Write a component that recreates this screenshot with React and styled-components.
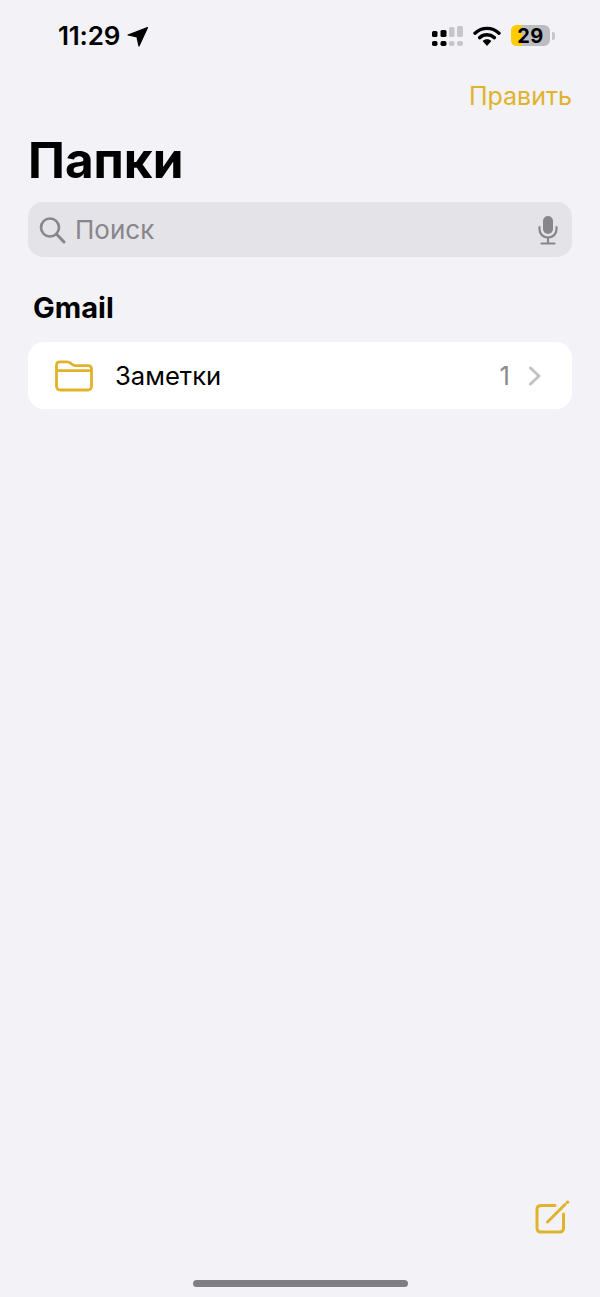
import React from "react";
import styled, { createGlobalStyle } from "styled-components";

const GlobalStyle = createGlobalStyle`
html, body {
  margin: 0;
  padding: 0;
  background: #f2f2f7;
}
`;

const Screen = styled.div`
position: relative;
display: flex;
flex-direction: column;
width: 600px;
height: 1297px;
overflow: hidden;
background: #f2f2f7;
font-family: Inter, "Liberation Sans", sans-serif;
color: #000;
`;

const StatusBar = styled.div`
display: flex;
align-items: center;
justify-content: space-between;
height: 35px;
padding: 0 45px 0 58px;
margin-top: 18px;
`;

const TimeGroup = styled.div`
display: flex;
align-items: center;
gap: 7px;
`;

const Time = styled.span`
font-size: 26px;
font-weight: 600;
letter-spacing: -0.2px;
`;

const StatusIcons = styled.div`
display: flex;
align-items: center;
gap: 10px;
`;

const Battery = styled.div`
display: flex;
align-items: center;
gap: 2px;
`;

const BatteryBody = styled.div`
position: relative;
display: flex;
align-items: center;
justify-content: center;
width: 39px;
height: 21px;
border-radius: 6px;
overflow: hidden;
background: #bdbdc1;
`;

const BatteryFill = styled.div`
position: absolute;
left: 0;
top: 0;
bottom: 0;
background: #ffcc00;
`;

const BatteryLabel = styled.span`
position: relative;
font-size: 20px;
font-weight: 700;
letter-spacing: 0.5px;
`;

const BatteryCap = styled.div`
width: 3px;
height: 8px;
border-radius: 0 2px 2px 0;
background: #c8c8cc;
`;

const NavBar = styled.div`
display: flex;
justify-content: flex-end;
padding: 0 28px;
margin-top: 28px;
`;

const EditLink = styled.span`
font-size: 25px;
line-height: 30px;
color: #e0b32a;
`;

const Title = styled.h1`
margin: 19px 0 0 28px;
font-size: 49.4px;
line-height: 60px;
font-weight: 700;
`;

const SearchBar = styled.div`
display: flex;
align-items: center;
height: 55px;
margin: 12px 28px 0;
padding: 0 14px 0 11px;
border-radius: 15px;
background: #e3e3e8;
`;

const SearchText = styled.span`
flex: 1;
margin-left: 9px;
font-size: 26px;
color: #87878b;
`;

const SectionTitle = styled.h2`
margin: 33px 0 0 33px;
font-size: 29px;
line-height: 36px;
font-weight: 700;
`;

const FolderRow = styled.div`
display: flex;
align-items: center;
height: 67px;
margin: 16px 28px 0;
padding: 0 30px 0 27px;
border-radius: 16px;
background: #fff;
`;

const FolderName = styled.span`
flex: 1;
margin-left: 22px;
font-size: 25.6px;
`;

const FolderCount = styled.span`
margin-right: 18px;
font-size: 25.6px;
color: #8a8a8e;
`;

const ComposeButton = styled.div`
position: absolute;
right: 30px;
bottom: 62px;
display: flex;
`;

const HomeIndicator = styled.div`
position: absolute;
left: 193px;
bottom: 10px;
width: 215px;
height: 7px;
border-radius: 4px;
background: #7f7f83;
`;

const LocationIcon = () => (
  <svg width="22" height="22" viewBox="0 0 22 22">
    <path d="M20.5 2.5 L1 10 L10 11.8 L12 21 Z" fill="#000" stroke="#000" strokeWidth="1.2" strokeLinejoin="round" />
  </svg>
);

const SignalIcon = () => (
  <svg width="31" height="20" viewBox="0 0 31 20">
    <rect x="0" y="5" width="5.5" height="6" rx="1.6" fill="#000" />
    <rect x="8.5" y="4" width="6" height="7" rx="1.6" fill="#000" />
    <rect x="17" y="1" width="5.5" height="10" rx="1.6" fill="#c6c6ca" />
    <rect x="25" y="0" width="6" height="11" rx="1.6" fill="#c6c6ca" />
    <rect x="0" y="15" width="5.5" height="5" rx="1.8" fill="#000" />
    <rect x="8.5" y="15" width="6" height="5" rx="1.8" fill="#000" />
    <rect x="17" y="15" width="5.5" height="5" rx="2" fill="#c6c6ca" />
    <rect x="25" y="15" width="6" height="5" rx="2" fill="#c6c6ca" />
  </svg>
);

const WifiIcon = () => (
  <svg width="28" height="22" viewBox="0 0 28 22" fill="none">
    <path d="M2 8.2 C9 1.8 19 1.8 26 8.2" stroke="#000" strokeWidth="3.4" strokeLinecap="round" />
    <path d="M6.6 12.6 C11 8.8 17 8.8 21.4 12.6" stroke="#000" strokeWidth="3.4" strokeLinecap="round" />
    <path d="M9.6 16 C12 13.6 16 13.6 18.4 16 L14 21 Z" fill="#000" />
  </svg>
);

const SearchIcon = () => (
  <svg width="27" height="28" viewBox="0 0 27 28" fill="none">
    <circle cx="11" cy="11.5" r="9" stroke="#87878b" strokeWidth="2.6" />
    <path d="M17.6 18.2 L25 26" stroke="#87878b" strokeWidth="3" strokeLinecap="round" />
  </svg>
);

const MicIcon = () => (
  <svg width="20" height="30" viewBox="0 0 20 30" fill="none">
    <rect x="5" y="1" width="10" height="18" rx="5" fill="#87878b" />
    <path d="M1.5 12 V14 C1.5 19 5 22.5 10 22.5 C15 22.5 18.5 19 18.5 14 V12" stroke="#87878b" strokeWidth="2.2" strokeLinecap="round" />
    <path d="M10 22.5 V28 M3.5 28.5 H16.5" stroke="#87878b" strokeWidth="2.2" strokeLinecap="round" />
  </svg>
);

const FolderIcon = () => (
  <svg width="38" height="32" viewBox="0 0 38 32" fill="none" stroke="#e0b32a" strokeWidth="2.8" strokeLinejoin="round">
    <path d="M1.5 9 V5 C1.5 3 2.8 1.8 5 1.8 H12 C14 1.8 14.6 2.4 16 3.6 C17.2 4.8 18 5.6 20 5.6 H33 C35.2 5.6 36.5 6.8 36.5 9 V26 C36.5 28.6 35 30 32.5 30 H5.5 C3 30 1.5 28.6 1.5 26 Z" />
    <path d="M1.5 10.6 H36.5" />
  </svg>
);

const ChevronIcon = () => (
  <svg width="14" height="20" viewBox="0 0 14 20" fill="none">
    <path d="M2.5 2 L11 10 L2.5 18" stroke="#c2c2c6" strokeWidth="3" strokeLinecap="round" strokeLinejoin="round" />
  </svg>
);

const ComposeIcon = () => (
  <svg width="35" height="35" viewBox="0 0 35 35" fill="none">
    <path d="M20 5.5 H6 C3.4 5.5 2 7 2 9.5 V28 C2 30.5 3.4 32 6 32 H24.5 C27 32 28.5 30.5 28.5 28 V14" stroke="#e0b32a" strokeWidth="3" strokeLinecap="round" />
    <path d="M12.5 22 L30 4.5" stroke="#e0b32a" strokeWidth="3" strokeLinecap="round" />
    <circle cx="32.5" cy="2.2" r="1.8" fill="#e0b32a" />
  </svg>
);

function App() {
  return (
    <Screen>
      <GlobalStyle />
      <StatusBar>
        <TimeGroup>
          <Time>11:29</Time>
          <LocationIcon />
        </TimeGroup>
        <StatusIcons>
          <SignalIcon />
          <WifiIcon />
          <Battery>
            <BatteryBody>
              <BatteryFill style={{ width: `${29 * 0.39}px` }} />
              <BatteryLabel>29</BatteryLabel>
            </BatteryBody>
            <BatteryCap />
          </Battery>
        </StatusIcons>
      </StatusBar>
      <NavBar>
        <EditLink>Править</EditLink>
      </NavBar>
      <Title>Папки</Title>
      <SearchBar>
        <SearchIcon />
        <SearchText>Поиск</SearchText>
        <MicIcon />
      </SearchBar>
      <SectionTitle>Gmail</SectionTitle>
      <FolderRow>
        <FolderIcon />
        <FolderName>Заметки</FolderName>
        <FolderCount>1</FolderCount>
        <ChevronIcon />
      </FolderRow>
      <ComposeButton>
        <ComposeIcon />
      </ComposeButton>
      <HomeIndicator />
    </Screen>
  );
}

export default App;
